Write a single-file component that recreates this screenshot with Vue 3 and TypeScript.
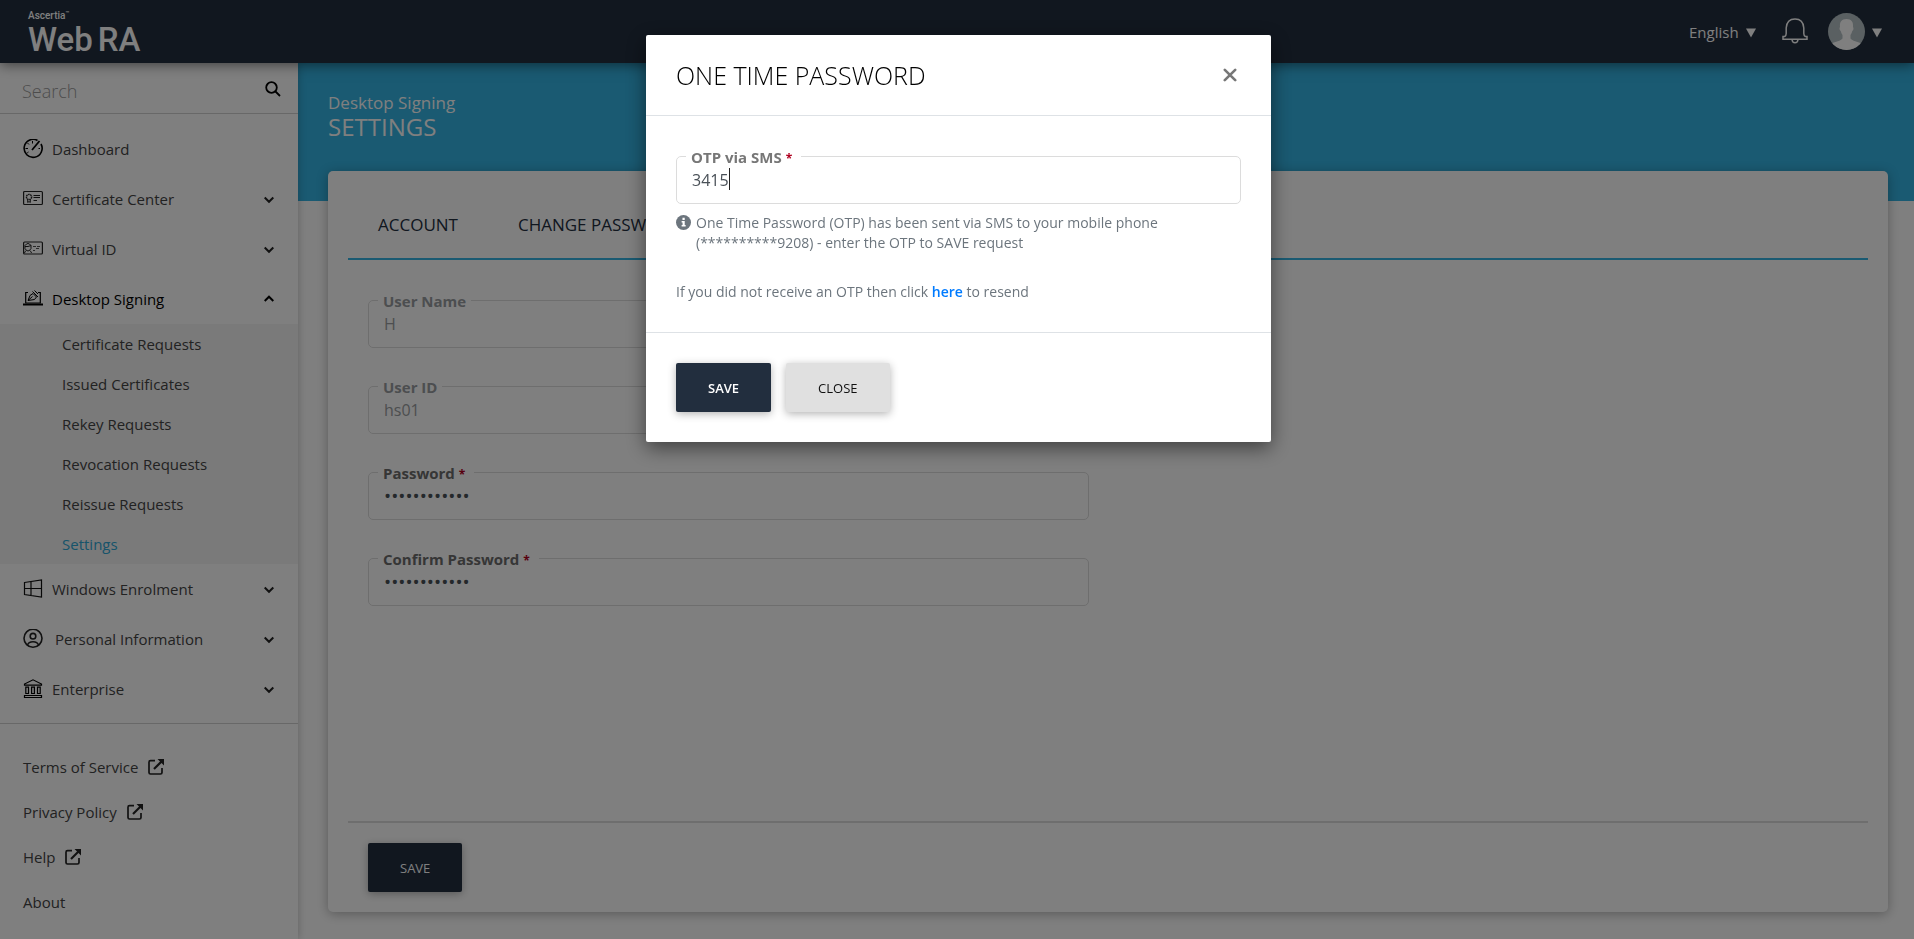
<script setup lang="ts">
import { ref } from 'vue'

interface NavItem {
  label: string
  icon: string
  expandable: boolean
  open?: boolean
  wide?: boolean
  children?: string[]
}

const nav: NavItem[] = [
  { label: 'Dashboard', icon: 'dashboard', expandable: false },
  { label: 'Certificate Center', icon: 'certificate', expandable: true },
  { label: 'Virtual ID', icon: 'virtual', expandable: true },
  {
    label: 'Desktop Signing',
    icon: 'signing',
    expandable: true,
    open: true,
    children: [
      'Certificate Requests',
      'Issued Certificates',
      'Rekey Requests',
      'Revocation Requests',
      'Reissue Requests',
      'Settings',
    ],
  },
  { label: 'Windows Enrolment', icon: 'windows', expandable: true },
  { label: 'Personal Information', icon: 'person', expandable: true, wide: true },
  { label: 'Enterprise', icon: 'enterprise', expandable: true },
]

const links = [
  { label: 'Terms of Service', external: true },
  { label: 'Privacy Policy', external: true },
  { label: 'Help', external: true },
  { label: 'About', external: false },
]

const fields = [
  { id: 'user-name', label: 'User Name', value: 'H', type: 'text', disabled: true },
  { id: 'user-id', label: 'User ID', value: 'hs01', type: 'text', disabled: true },
  { id: 'password', label: 'Password', value: 'abcdefghijkl', type: 'password', disabled: false },
  { id: 'confirm', label: 'Confirm Password', value: 'abcdefghijkl', type: 'password', disabled: false },
]

const otp = ref('3415')
</script>

<template>
  <div class="page">
    <header class="topbar">
      <a class="logo" href="#" aria-label="Ascertia WebRA">
        <span class="logo-small">Ascertia<sup>™</sup></span>
        <span class="logo-big"><span>Web</span><span>RA</span></span>
      </a>
      <div class="tools">
        <label class="language">
          <select aria-label="Language"><option>English</option></select>
          <svg class="tri" viewBox="0 0 10 10"><path d="M0 0.5H10L5 9.5Z" fill="currentColor" /></svg>
        </label>
        <button class="bell" type="button" aria-label="Notifications">
          <svg viewBox="0 0 26 26" fill="none" stroke="currentColor" stroke-width="1.5">
            <path d="M1 21.2V18.6H2.6Q4.2 17.6 4.2 15.5V10Q4.8 1 13 1Q21.200 1 21.800 10V15.500Q21.800 17.600 23.400 18.600H25V21.200Z" />
            <path d="M10 21.500Q10.300 24.800 13 24.800Q15.700 24.800 16 21.500" />
          </svg>
        </button>
        <button class="user" type="button" aria-label="Account menu">
          <svg class="avatar" viewBox="0 0 37 37">
            <defs><clipPath id="face"><circle cx="18.500" cy="18.500" r="18.500" /></clipPath></defs>
            <g clip-path="url(#face)">
              <rect width="37" height="37" fill="#b4c0c4" />
              <path d="M18.500 6C23.500 6 25.500 9 25 14C26 15 25.400 17.500 24.300 18C23.800 20 23 21 22.500 22V25.500C24 28 30 28.500 33 30.500V37H4V30.500C7 28.500 13 28 14.500 25.500V22C14 21 13.200 20 12.700 18C11.600 17.500 11 15 12 14C11.500 9 13.500 6 18.500 6Z" fill="#fff" />
            </g>
          </svg>
          <svg class="tri" viewBox="0 0 10 10"><path d="M0 0.500H10L5 9.500Z" fill="currentColor" /></svg>
        </button>
      </div>
    </header>

    <div class="body">
      <aside class="sidebar">
        <div class="search">
          <input type="search" placeholder="Search" aria-label="Search" />
          <button type="button" aria-label="Search">
            <svg viewBox="0 0 16 16" fill="none" stroke="#000" stroke-width="1.800">
              <circle cx="6.500" cy="6.500" r="5.300" /><path d="M10.500 10.500L15 15" />
            </svg>
          </button>
        </div>

        <nav>
          <div v-for="item in nav" :key="item.label">
            <a href="#" class="nav-item" :class="{ open: item.open, wide: item.wide }">
              <svg v-if="item.icon === 'dashboard'" class="nav-icon" viewBox="0 0 20 20" fill="none" stroke="#000">
                <path d="M14.500 1.500A9 9 0 1 0 18 5" stroke-width="1.600" />
                <path d="M9 11L16.500 2" stroke-width="1.800" />
                <path d="M9.500 2V4.500M4.500 4L6 5.500M2.500 9.500H5M4.200 14L5.500 13M15.500 9.500H17" />
              </svg>
              <svg v-else-if="item.icon === 'certificate'" class="nav-icon" viewBox="0 0 20 20" fill="none" stroke="#222">
                <rect x="0.600" y="2.500" width="18.800" height="13" rx="1" stroke-width="1.200" />
                <circle cx="6" cy="8" r="2.600" stroke-width="1.400" stroke-dasharray="1.600 0.600" />
                <path d="M4.700 10.500V13.500L6 12.500L7.300 13.500V10.500M10.500 6.500H17M10.500 8.500H17M10.500 11.500H14" />
              </svg>
              <svg v-else-if="item.icon === 'virtual'" class="nav-icon" viewBox="0 0 20 20" fill="none" stroke="#222">
                <rect x="0.600" y="3" width="18.800" height="12" rx="1" stroke-width="1.200" />
                <path d="M2 6.500Q5 2.500 8 6.500V9.500Q5 14.500 2 9.500ZM2 7.500Q5 8 8 6.500M1.500 14Q2 12 3.500 11.500M8.500 14Q8 12 6.500 11.500" />
                <path d="M10 7.500H13M14 7.500H17M10 11.500H12M13 9.500H16" stroke="#555" />
              </svg>
              <svg v-else-if="item.icon === 'signing'" class="nav-icon" viewBox="0 0 20 20" fill="none" stroke="#000">
                <path d="M5 3.500H2.700V14H17.300V3.500H15" stroke-width="1.200" />
                <path d="M0 15.500H20" stroke-width="2" />
                <path d="M5 11.500L7 6.500L10 4.500L13.500 8L11.500 10.500ZM5 11.500L9.500 7.500M9.500 2.500L15 8M11.500 1.500L15 5" />
              </svg>
              <svg v-else-if="item.icon === 'windows'" class="nav-icon" viewBox="0 0 20 20" fill="none" stroke="#111">
                <path d="M1.500 3.500L18.500 1V18L1.500 15.500ZM1.500 9.500H18.500M8 2.500V16.500" stroke-width="1.200" />
              </svg>
              <svg v-else-if="item.icon === 'person'" class="nav-icon" viewBox="0 0 20 20" fill="none" stroke="#222" stroke-width="1.600">
                <circle cx="10" cy="9.200" r="9" /><circle cx="10" cy="7.200" r="2.800" />
                <path d="M4.500 16Q5.500 12.700 10 12.700Q14.500 12.700 15.500 16" />
              </svg>
              <svg v-else class="nav-icon" viewBox="0 0 20 20" fill="none" stroke="#000" stroke-width="1.200">
                <path d="M1.500 6.200V5L10 0.800L18.500 5V6.200ZM1.500 16.500H18.500V18.500H1.500ZM2.800 8.200H5.500V14.500H2.800ZM8.600 8.200H11.400V14.500H8.600ZM14.500 8.200H17.200V14.500H14.500Z" />
              </svg>
              <span class="nav-label">{{ item.label }}</span>
              <svg v-if="item.expandable" class="chevron" viewBox="0 0 10 10" fill="none" stroke="currentColor" stroke-width="2">
                <path :d="item.open ? 'M0.700 7L5 2.700L9.300 7' : 'M0.700 3.500L5 7.800L9.300 3.500'" />
              </svg>
            </a>
            <div v-if="item.children" class="submenu">
              <a v-for="child in item.children" :key="child" href="#" :class="{ active: child === 'Settings' }">{{ child }}</a>
            </div>
          </div>
        </nav>

        <div class="links">
          <a v-for="link in links" :key="link.label" href="#">
            {{ link.label }}
            <svg v-if="link.external" viewBox="0 0 16 16" fill="none" stroke="currentColor" stroke-width="1.700">
              <path d="M7 1.700H2.500Q1 1.700 1 3.200V13.500Q1 15 2.500 15H12.500Q14 15 14 13.500V9" />
              <path d="M6 10L14 2" stroke-width="2.200" /><path d="M9.500 0H16V6.500Z" fill="currentColor" stroke="none" />
            </svg>
          </a>
        </div>
      </aside>

      <main class="main">
        <div class="banner">
          <div class="crumb">Desktop Signing</div>
          <h1>SETTINGS</h1>
        </div>
        <section class="card">
          <div class="tabs">
            <a href="#">ACCOUNT</a>
            <a href="#">CHANGE PASSWORD</a>
          </div>
          <form class="form" @submit.prevent>
            <div class="column">
              <fieldset v-for="f in fields" :key="f.id" class="field" :class="{ disabled: f.disabled }">
                <legend>
                  <label :for="f.id">{{ f.label }}</label><span v-if="!f.disabled" class="star">*</span>
                </legend>
                <input :id="f.id" :type="f.type" :value="f.value" :disabled="f.disabled" />
              </fieldset>
            </div>
          </form>
          <div class="card-foot">
            <button class="btn dark" type="button">SAVE</button>
          </div>
        </section>
      </main>
    </div>

    <div class="overlay">
      <form class="modal" role="dialog" aria-labelledby="otp-title" @submit.prevent>
        <div class="modal-head">
          <h2 id="otp-title">ONE TIME PASSWORD</h2>
          <button class="close" type="button" aria-label="Close">
            <svg viewBox="0 0 14 14" fill="none" stroke="#777" stroke-width="2.600" stroke-linecap="round"><path d="M1.800 1.800L12.200 12.200M12.200 1.800L1.800 12.200" /></svg>
          </button>
        </div>
        <div class="modal-body">
          <fieldset class="field">
            <legend><label for="otp">OTP via SMS</label><span class="star">*</span></legend>
            <input id="otp" v-model="otp" type="text" class="otp" />
            <span class="caret"></span>
          </fieldset>
          <div class="help">
            <svg viewBox="0 0 16 16">
              <circle cx="8" cy="8" r="8" fill="#6c757d" />
              <path d="M6.900 2.900H9.300V5.300H6.900ZM6 6.400H9.300V10.700H10.300V12.200H6V10.700H7V7.900H6Z" fill="#fff" />
            </svg>
            <p>One Time Password (OTP) has been sent via SMS to your mobile phone (**********9208) - enter the OTP to SAVE request</p>
          </div>
          <p class="resend">If you did not receive an OTP then click <a href="#">here</a> to resend</p>
        </div>
        <div class="modal-foot">
          <button class="btn dark strong" type="submit">SAVE</button>
          <button class="btn light" type="button">CLOSE</button>
        </div>
      </form>
    </div>
  </div>
</template>

<style>
body {
  background: #fff;
}
</style>

<style scoped>
.page,
.page * {
  box-sizing: border-box;
}
.page {
  min-height: 100vh;
  display: flex;
  flex-direction: column;
  font-family: "Open Sans", "Noto Sans", sans-serif;
  font-size: 15px;
  color: #444;
}
a {
  color: inherit;
  text-decoration: none;
}
button,
input,
select {
  font: inherit;
  color: inherit;
  border: 0;
  background: none;
  padding: 0;
  margin: 0;
  outline: 0;
}
h1,
h2,
p {
  margin: 0;
  font-weight: 400;
}
svg {
  display: block;
  flex: none;
}

.topbar {
  position: relative;
  z-index: 2;
  height: 63px;
  padding: 0 32px 0 28px;
  display: flex;
  justify-content: space-between;
  background: #222e3e;
  box-shadow: 0 2px 12px rgba(0, 0, 0, 0.5);
  color: #fff;
}
.logo {
  padding-top: 10px;
  font-family: Roboto, sans-serif;
}
.logo-small {
  display: block;
  font-size: 10px;
  line-height: 12px;
  font-weight: 500;
}
.logo-small sup {
  font-size: 6px;
  line-height: 0;
}
.logo-big {
  display: flex;
  gap: 5px;
  font-size: 33px;
  line-height: 35px;
  font-weight: 500;
}
.tools {
  display: flex;
  align-items: center;
}
.language {
  display: flex;
  align-items: center;
  gap: 7px;
}
.language select {
  appearance: none;
}
.language option {
  color: #222;
}
.tri {
  width: 10px;
  height: 10px;
  margin-top: 2px;
}
.bell {
  margin: 0 20px 2px 26px;
}
.bell svg {
  width: 26px;
  height: 26px;
}
.user {
  display: flex;
  align-items: center;
  gap: 7px;
}
.avatar {
  width: 37px;
  height: 37px;
}

.body {
  flex: 1;
  display: flex;
}
.sidebar {
  position: relative;
  z-index: 1;
  flex: none;
  width: 298px;
  background: #fff;
  box-shadow: 0 0 8px rgba(0, 0, 0, 0.25);
}
.search {
  height: 51px;
  padding: 5px 17px 0 22px;
  display: flex;
  align-items: center;
  border-bottom: 1px solid #d0d0d0;
}
.search input {
  flex: 1;
  min-width: 0;
  font-size: 18px;
  font-weight: 300;
}
.search input::placeholder {
  color: #999;
}
.search button {
  padding-bottom: 3px;
}
.search svg {
  width: 16px;
  height: 16px;
}
nav {
  padding: 10px 0 9px;
  border-bottom: 1px solid #d0d0d0;
}
.nav-item {
  height: 50px;
  padding: 0 24px 0 23px;
  display: flex;
  align-items: center;
  gap: 9px;
}
.nav-item.wide {
  gap: 12px;
}
.nav-item.open {
  color: #000;
}
.nav-icon {
  width: 20px;
  height: 20px;
}
.nav-label {
  flex: 1;
}
.chevron {
  width: 10px;
  height: 10px;
  color: #222;
}
.open .chevron {
  color: #000;
}
.submenu {
  background: #f4f4f4;
}
.submenu a {
  display: block;
  padding-left: 62px;
  line-height: 40px;
}
.submenu .active {
  color: #2fa8d6;
}
.links {
  padding: 20px 0 14px 23px;
}
.links a {
  display: flex;
  align-items: center;
  gap: 10px;
  height: 45px;
}
.links svg {
  width: 16px;
  height: 16px;
  color: #222;
}

.main {
  flex: 1;
  min-width: 0;
  display: flex;
  flex-direction: column;
}
.banner {
  height: 138px;
  padding: 28px 30px 0;
  background: #34b4e4;
  color: #fff;
}
.crumb {
  font-size: 17px;
  line-height: 24px;
}
h1 {
  font-size: 24px;
  line-height: 24px;
}
.card {
  flex: 1;
  margin: -30px 26px 27px 30px;
  padding: 0 20px 20px;
  display: flex;
  flex-direction: column;
  background: #fff;
  border-radius: 5px;
  box-shadow: 0 2px 12px rgba(0, 0, 0, 0.3);
}
.tabs {
  height: 89px;
  padding: 20px 30px 0;
  display: flex;
  gap: 60px;
  align-items: center;
  border-bottom: 2px solid #34b4e4;
  color: #222e3e;
  font-size: 17px;
}
.form {
  flex: 1;
  padding: 33px 20px;
  display: grid;
  grid-template-columns: 1fr 1fr;
  gap: 38px;
}
.column {
  display: flex;
  flex-direction: column;
  gap: 31px;
}
.field {
  position: relative;
  margin: 0;
  min-width: 0;
  height: 55px;
  padding: 0 9px;
  border: 1px solid #dcdcdc;
  border-radius: 5px;
}
.field legend {
  height: 14px;
  padding: 0 5px;
  font-size: 15px;
  line-height: 16px;
  font-weight: 700;
  color: #777;
  white-space: nowrap;
}
.column .field legend {
  color: #6c6c6c;
}
.column .disabled legend {
  color: #999ca0;
}
.star {
  padding: 0 4px;
  font-size: 12px;
  line-height: 12px;
  color: #b00020;
}
.field input {
  display: block;
  width: 100%;
  height: 40px;
  padding: 0 6px 6px;
  font-size: 16px;
  color: #495057;
}
.field input[type="password"] {
  font-size: 19px;
}
.disabled input {
  color: #9a9da0;
}
.card-foot {
  padding: 20px 20px 0;
  border-top: 2px solid #dcdcdc;
}

.btn {
  height: 49px;
  padding: 0 32px;
  border-radius: 2px;
  font-size: 13px;
  box-shadow: 0 2px 8px rgba(0, 0, 0, 0.3);
}
.dark {
  background: #222e3e;
  color: #fff;
}
.strong {
  font-weight: 600;
}
.light {
  background: #e0e0e0;
  color: #111;
}

.overlay {
  position: fixed;
  inset: 0;
  z-index: 10;
  padding: 35px 20px 35px 23px;
  background: rgba(0, 0, 0, 0.5);
}
.modal {
  max-width: 625px;
  margin: 0 auto;
  background: #fff;
  border-radius: 2px;
  box-shadow: 0 6px 20px rgba(0, 0, 0, 0.5);
}
.modal-head {
  height: 81px;
  padding: 0 34px 0 30px;
  display: flex;
  align-items: center;
  justify-content: space-between;
  border-bottom: 1px solid #dee2e6;
  color: #000;
}
h2 {
  font-size: 25px;
  line-height: 32px;
  font-weight: 300;
}
.close svg {
  width: 14px;
  height: 14px;
}
.modal-body {
  padding: 33px 30px 30px;
  font-size: 14px;
  line-height: 20px;
  color: #6c757d;
}
.otp {
  caret-color: transparent;
}
.caret {
  position: absolute;
  left: calc(15px + 4ch);
  top: 5px;
  width: 1px;
  height: 22px;
  background: #222;
  font-size: 16px;
}
.help {
  display: flex;
  gap: 5px;
  margin-top: 9px;
}
.help svg {
  width: 15px;
  height: 15px;
  margin-top: 2px;
}
.help p {
  max-width: 480px;
}
.resend {
  margin-top: 29px;
}
.resend a {
  color: #007bff;
  font-weight: 600;
}
.modal-foot {
  padding: 30px;
  display: flex;
  gap: 15px;
  border-top: 1px solid #dee2e6;
}
</style>
